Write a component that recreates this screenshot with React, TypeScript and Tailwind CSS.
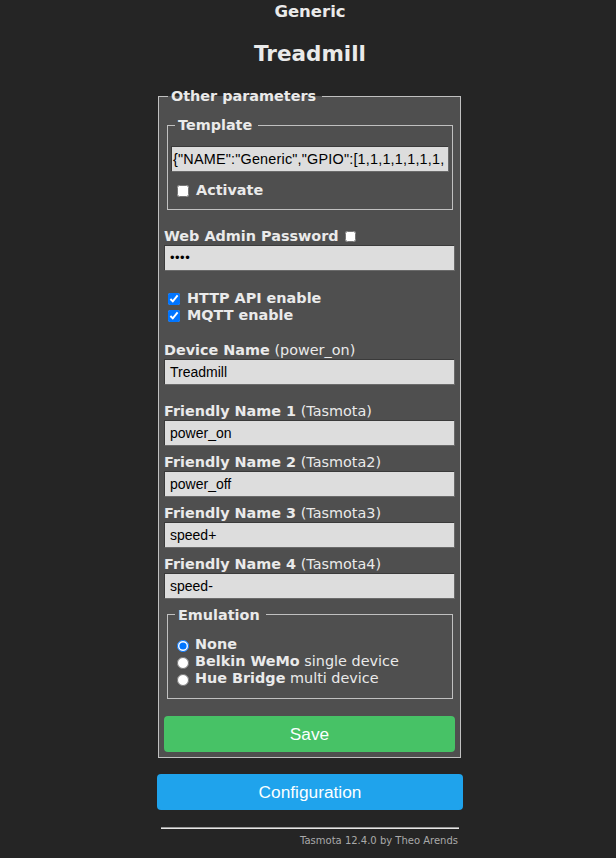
import React from "react";

const dv = { fontFamily: '"DejaVu Sans", Verdana, sans-serif' };
const ar = { fontFamily: '"Liberation Sans", Arial, sans-serif' };

function Box({ children, className = "", small = false }: { children?: React.ReactNode; className?: string; small?: boolean }) {
  return (
    <div
      className={
        "h-[26px] w-full min-w-0 bg-[#dddddd] border border-t-[#3a3a3a] border-l-[#3a3a3a] border-r-[#6a6a6a] border-b-[#6a6a6a] text-black leading-[24px] whitespace-nowrap overflow-hidden " +
        (small ? "text-[13px] " : "text-[14px] ") +
        className
      }
      style={ar}
    >
      {children}
    </div>
  );
}

function Label({ bold, rest, className = "" }: { bold: string; rest?: string; className?: string }) {
  return (
    <div className={"leading-[17px] text-[14.4px] text-[#eaeaea] " + className}>
      <b>{bold}</b>
      {rest ? <span> {rest}</span> : null}
    </div>
  );
}

export default function App() {
  return (
    <div className="min-h-[858px] bg-[#252525] text-[#eaeaea] pl-[4px]" style={dv}>
      <div className="text-center font-bold text-[16.5px] leading-[22px] pt-[1px]">Generic</div>
      <div className="text-center font-bold text-[21.5px] leading-[26px] mt-[17.5px]">Treadmill</div>
      <div className="w-[306px] mx-auto mt-[20.5px]">
        <fieldset className="ml-[1px] w-[303px] min-w-0 border border-[#c0c0c0] bg-[#4f4f4f] px-[5px] pt-0 pb-[5px]">
          <legend className="ml-[4px] px-[3px] pr-[6px] font-bold text-[14.4px] leading-[18px]">Other parameters</legend>

          <fieldset className="mt-[11px] ml-[3px] mr-[2px] min-w-0 border border-[#c0c0c0] px-[3px] pt-0 pb-[10px]">
            <legend className="ml-[4px] px-[3px] pr-[6px] font-bold text-[14.4px] leading-[18px]">Template</legend>
            <Box className="mt-[12px] pl-[1px] !text-[14.4px] tracking-[0.2px]">{'{"NAME":"Generic","GPIO":[1,1,1,1,1,1,1,'}</Box>
            <div className="mt-[9px] h-[18px] flex items-center text-[14.4px] leading-[18px]">
              <input type="checkbox" className="m-0 ml-[6px] mr-[7px] w-[12px] h-[12px] mt-[2px]" />
              <b>Activate</b>
            </div>
          </fieldset>

          <div className="mt-[17px] h-[18px] flex items-center text-[14.4px] leading-[18px]">
            <b>Web Admin Password</b>
            <input type="checkbox" className="m-0 ml-[6px] w-[11px] h-[11px] mt-[1px]" />
          </div>
          <Box small className="pl-[5px] tracking-[0.5px]">••••</Box>

          <div className="mt-[18.5px] h-[17px] flex items-center text-[14.4px] leading-[17px]">
            <input type="checkbox" defaultChecked className="m-0 ml-[4px] mr-[7px] w-[12px] h-[12px] mt-[2px]" />
            <b>HTTP API enable</b>
          </div>
          <div className="h-[17px] flex items-center text-[14.4px] leading-[17px]">
            <input type="checkbox" defaultChecked className="m-0 ml-[4px] mr-[7px] w-[12px] h-[12px] mt-[2px]" />
            <b>MQTT enable</b>
          </div>

          <Label bold="Device Name" rest="(power_on)" className="mt-[18px]" />
          <Box className="pl-[5px]">Treadmill</Box>

          <Label bold="Friendly Name 1" rest="(Tasmota)" className="mt-[18px]" />
          <Box className="pl-[5px]">power_on</Box>
          <Label bold="Friendly Name 2" rest="(Tasmota2)" className="mt-[8.3px]" />
          <Box className="pl-[5px]">power_off</Box>
          <Label bold="Friendly Name 3" rest="(Tasmota3)" className="mt-[8.3px]" />
          <Box className="pl-[5px]">speed+</Box>
          <Label bold="Friendly Name 4" rest="(Tasmota4)" className="mt-[8.3px]" />
          <Box className="pl-[5px]">speed-</Box>

          <fieldset className="mt-[6.6px] ml-[3px] mr-[2px] min-w-0 border border-[#c0c0c0] px-[3px] pt-0 pb-[10.5px]">
            <legend className="ml-[4px] px-[3px] pr-[6px] font-bold text-[14.4px] leading-[18px]">Emulation</legend>
            <div className="mt-[12.5px]">
              <div className="h-[17px] flex items-center text-[14.4px] leading-[17px]">
                <input type="radio" name="emu" defaultChecked className="m-0 ml-[6px] mr-[6px] w-[12px] h-[12px] mt-[2px]" />
                <b>None</b>
              </div>
              <div className="h-[17px] flex items-center text-[14.4px] leading-[17px]">
                <input type="radio" name="emu" className="m-0 ml-[6px] mr-[6px] w-[12px] h-[12px] mt-[2px]" />
                <b>Belkin WeMo</b>
                <span className="whitespace-pre"> single device</span>
              </div>
              <div className="h-[17px] flex items-center text-[14.4px] leading-[17px]">
                <input type="radio" name="emu" className="m-0 ml-[6px] mr-[6px] w-[12px] h-[12px] mt-[2px]" />
                <b>Hue Bridge</b>
                <span className="whitespace-pre"> multi device</span>
              </div>
            </div>
          </fieldset>

          <button
            className="mt-[17px] w-full h-[36px] rounded-[4px] bg-[#47c266] text-[#faffff] text-[17.3px] leading-[36px] text-center block"
            style={ar}
          >
            Save
          </button>
        </fieldset>

        <button
          className="mt-[16px] w-full h-[36px] rounded-[4px] bg-[#1fa3ec] text-[#faffff] text-[17.3px] leading-[36px] text-center block"
          style={ar}
        >
          Configuration
        </button>

        <div className="mt-[17.5px] mx-[4px] h-[2px] border-t border-t-[#9a9a9a] border-b border-b-[#e6e6e6]" />
        <div className="mt-[6px] pr-[5px] text-right text-[10px] leading-[12px] text-[#aaaaaa]">Tasmota 12.4.0 by Theo Arends</div>
      </div>
    </div>
  );
}
